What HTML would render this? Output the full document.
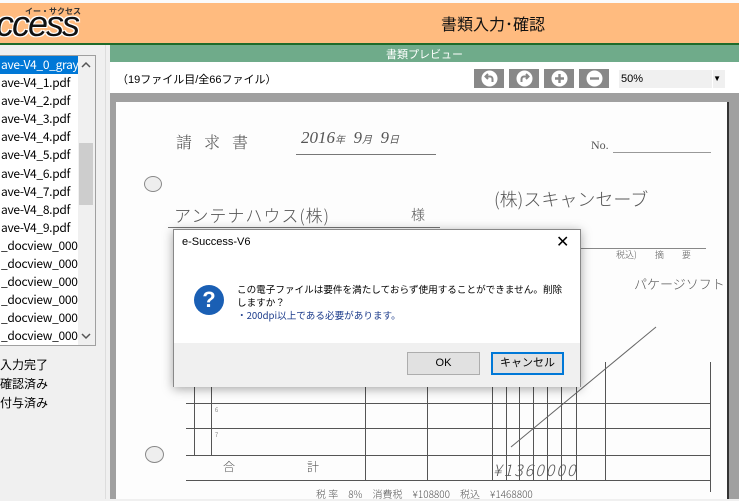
<!DOCTYPE html>
<html><head><meta charset="utf-8"><style>
*{margin:0;padding:0;box-sizing:border-box}
body{width:739px;height:499px;overflow:hidden;background:#f0f0f0;font-family:"Liberation Sans","Noto Sans CJK JP",sans-serif;position:relative}
.abs{position:absolute}
.hdr{left:0;top:3px;width:739px;height:40px;background:#ffbb7f}
.gl{left:0;top:43px;width:739px;height:2px;background:#1e6b2a}
.list{left:-2px;top:55px;width:98px;height:291px;background:#fff;border:1px solid #a0a0a0;overflow:hidden}
.list div{height:18.1px;font-size:12px;line-height:18px;padding-left:2px;white-space:nowrap;font-family:"Noto Sans CJK JP",sans-serif;color:#000;letter-spacing:-0.3px}
.sb{left:78px;top:56px;width:17px;height:289px;background:#f0f0f0}
.doc{left:110px;top:93px;width:629px;height:406px;background:#a0a0a0}
.page{left:116px;top:102px;width:613px;height:397px;background:#fdfdfd;border-right:2px solid #333}
.h{position:absolute;height:1px;background:#555}
.v{position:absolute;width:1px;background:#555}
.btn{position:absolute;top:69px;width:30px;height:19px;background:#888}
.btn svg{display:block;margin:1px auto}
.hw{position:absolute;font-family:"Noto Sans CJK JP",sans-serif;color:#555;font-weight:300;white-space:nowrap}
</style></head><body>
<div class="abs hdr"></div>
<div class="abs" style="left:0;top:0;width:739px;height:3px;background:#fbfbfb"></div>
<div class="abs" style="left:-4px;top:4px;font:italic 36px 'Liberation Sans',sans-serif;color:#111;letter-spacing:-2px;text-shadow:1px 1px 0 #fff,-1px -1px 0 #fff,1px -1px 0 #fff,-1px 1px 0 #fff;line-height:40px">ccess</div>
<div class="abs" style="left:25px;top:6px;font-size:8px;font-weight:bold;color:#333">イー・サクセス</div>
<div class="abs" style="left:441px;top:11px;font-size:16px;color:#111">書類入力･確認</div>
<div class="abs gl"></div>
<div class="abs list">
<div style="background:#0078d7;color:#fff;width:80px">ave-V4_0_gray</div>
<div>ave-V4_1.pdf</div><div>ave-V4_2.pdf</div><div>ave-V4_3.pdf</div><div>ave-V4_4.pdf</div><div>ave-V4_5.pdf</div><div>ave-V4_6.pdf</div><div>ave-V4_7.pdf</div><div>ave-V4_8.pdf</div><div>ave-V4_9.pdf</div><div>_docview_0000</div><div>_docview_0000</div><div>_docview_0000</div><div>_docview_0000</div><div>_docview_0000</div><div>_docview_0000</div>
</div>
<div class="abs sb"></div>
<div class="abs" style="left:79px;top:143px;width:14px;height:62px;background:#cdcdcd"></div>
<svg class="abs" style="left:81px;top:61px" width="10" height="8"><path d="M1 6L5 2 9 6" stroke="#555" stroke-width="1.5" fill="none"/></svg>
<svg class="abs" style="left:81px;top:332px" width="10" height="8"><path d="M1 2L5 6 9 2" stroke="#555" stroke-width="1.5" fill="none"/></svg>
<div class="abs" style="left:0;top:356px;font-size:12px;line-height:19px">入力完了<br>確認済み<br>付与済み</div>
<div class="abs" style="left:105px;top:45px;width:1px;height:454px;background:#ddd"></div>
<div class="abs" style="left:110px;top:45px;width:629px;height:17px;background:#6fab8a"></div>
<div class="abs" style="left:386px;top:46px;font-size:11px;color:#fff">書類プレビュー</div>
<div class="abs" style="left:110px;top:62px;width:629px;height:31px;background:#fff"></div>
<div class="abs" style="left:117px;top:71px;font-size:11px">（19ファイル目/全66ファイル）</div>
<div class="btn" style="left:474px"><svg width="17" height="17"><circle cx="8.5" cy="8.5" r="8" fill="#fff"/><path d="M11.5 12v-3a2.5 2.5 0 0 0-2.5-2.5H5M7 4L4.5 6.5 7 9" stroke="#888" stroke-width="2" fill="none"/></svg></div>
<div class="btn" style="left:509px"><svg width="17" height="17"><circle cx="8.5" cy="8.5" r="8" fill="#fff"/><path d="M5.5 12v-3a2.5 2.5 0 0 1 2.5-2.5H12M10 4l2.5 2.5L10 9" stroke="#888" stroke-width="2" fill="none"/></svg></div>
<div class="btn" style="left:544px"><svg width="17" height="17"><circle cx="8.5" cy="8.5" r="8" fill="#fff"/><path d="M4 8.5h9M8.5 4v9" stroke="#888" stroke-width="2.4"/></svg></div>
<div class="btn" style="left:579px"><svg width="17" height="17"><circle cx="8.5" cy="8.5" r="8" fill="#fff"/><path d="M4 8.5h9" stroke="#888" stroke-width="2.4"/></svg></div>
<div class="abs" style="left:619px;top:70px;width:106px;height:18px;background:#f0f0f0;font-size:11px;line-height:18px;padding-left:2px">50%<span style="position:absolute;right:4px;font-size:8px">▼</span></div>
<div class="abs" style="left:712px;top:70px;width:1px;height:18px;background:#fff"></div>
<div class="abs doc"></div>
<div class="abs page">
<div class="hw" style="left:60px;top:28px;font-size:16px;letter-spacing:12px;font-family:'Noto Serif CJK SC',serif;color:#555">請求書</div>
<div class="hw" style="left:185px;top:26px;font-size:17px;font-style:italic;font-family:'Liberation Serif',serif">2016<span style="font-size:10px">年</span>&nbsp; 9<span style="font-size:10px">月</span>&nbsp; 9<span style="font-size:10px">日</span></div>
<div class="h" style="left:180px;top:52px;width:140px;background:#777"></div>
<div class="hw" style="left:475px;top:36px;font-size:12px;font-family:'Liberation Serif',serif">No.</div>
<div class="h" style="left:497px;top:50px;width:98px;background:#999"></div>
<div class="abs" style="left:28px;top:74px;width:18px;height:16px;border-radius:50%;border:1px solid #888;background:#eee"></div>
<div class="hw" style="left:58px;top:100px;font-size:17px;letter-spacing:1px">アンテナハウス(株)</div>
<div class="hw" style="left:295px;top:103px;font-size:14px">様</div>
<div class="h" style="left:52px;top:125px;width:272px;background:#777"></div>
<div class="hw" style="left:378px;top:84px;font-size:18px">(株)スキャンセーブ</div>
<div class="h" style="left:440px;top:146px;width:150px;background:#888"></div>
<div class="hw" style="left:500px;top:146px;font-size:9px">税込)　　摘　　要</div>
<div class="hw" style="left:518px;top:172px;font-size:13px">パケージソフト</div>
<div class="h" style="left:70px;top:301px;width:525px"></div>
<div class="h" style="left:70px;top:326px;width:525px"></div>
<div class="h" style="left:70px;top:353px;width:525px"></div>
<div class="h" style="left:70px;top:378px;width:525px"></div>
<div class="v" style="left:78px;top:260px;height:93px"></div>
<div class="v" style="left:95px;top:260px;height:93px"></div>
<div class="v" style="left:249px;top:260px;height:118px"></div>
<div class="v" style="left:311px;top:260px;height:118px"></div>
<div class="v" style="left:376px;top:260px;height:118px"></div>
<div class="v" style="left:390px;top:260px;height:118px"></div>
<div class="v" style="left:403px;top:260px;height:118px"></div>
<div class="v" style="left:417px;top:260px;height:118px"></div>
<div class="v" style="left:431px;top:260px;height:118px"></div>
<div class="v" style="left:445px;top:260px;height:118px"></div>
<div class="v" style="left:460px;top:260px;height:118px"></div>
<div class="v" style="left:489px;top:260px;height:118px"></div>
<div class="v" style="left:594px;top:260px;height:130px"></div>
<div class="hw" style="left:99px;top:303px;font-size:6px">6</div>
<div class="hw" style="left:99px;top:328px;font-size:6px">7</div>
<div class="hw" style="left:107px;top:356px;font-size:12px">合　　　　　　計</div>
<div class="hw" style="left:377px;top:355px;font-size:16px;letter-spacing:2px;font-style:italic">¥1360000</div>
<div class="abs" style="left:29px;top:344px;width:19px;height:17px;border-radius:50%;border:1px solid #888;background:#eee"></div>
<svg class="abs" style="left:390px;top:220px" width="160" height="130"><path d="M5 125L150 5" stroke="#666" stroke-width="1" fill="none"/></svg>
<div class="hw" style="left:200px;top:384px;font-size:10px">税 率　8%　消費税　¥108800　税込　¥1468800</div>
</div>
<!-- dialog -->
<div class="abs" style="left:173px;top:229px;width:408px;height:158px;background:#fff;border:1px solid #888;box-shadow:0 2px 10px rgba(0,0,0,.35)">
<div class="abs" style="left:8px;top:6px;font-size:11px">e-Success-V6</div>
<div class="abs" style="left:382px;top:2px;font-size:16px;font-weight:300">✕</div>
<div class="abs" style="left:20px;top:55px;width:30px;height:30px;border-radius:50%;background:#1a5fb4;color:#fff;font-size:22px;font-weight:bold;text-align:center;line-height:30px">?</div>
<div class="abs" style="left:63px;top:53px;font-size:9.6px;line-height:13px;width:330px;font-family:'Noto Sans CJK JP',sans-serif">この電子ファイルは要件を満たしておらず使用することができません。削除しますか？<br><span style="color:#1a3a8a">・200dpi以上である必要があります。</span></div>
<div class="abs" style="left:0;top:113px;width:406px;height:44px;background:#f0f0f0"></div>
<div class="abs" style="left:233px;top:122px;width:73px;height:23px;background:#e1e1e1;border:1px solid #adadad;font-size:11px;text-align:center;line-height:21px">OK</div>
<div class="abs" style="left:317px;top:122px;width:73px;height:23px;background:#e1e1e1;border:2px solid #0078d7;font-size:11px;text-align:center;line-height:19px">キャンセル</div>
</div>
</body></html>
